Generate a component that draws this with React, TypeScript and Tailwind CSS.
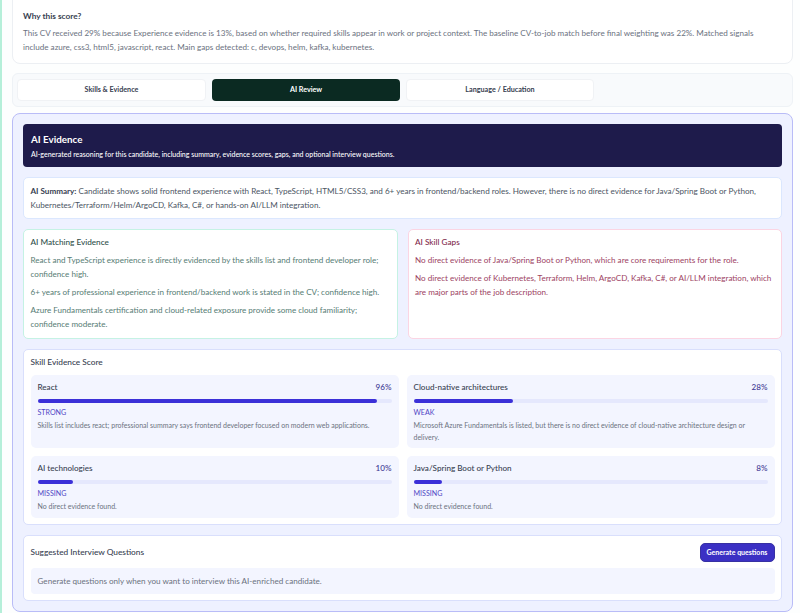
const font = { fontFamily: 'Lato, "Noto Sans", sans-serif' };

const skills = [
  {
    name: "React",
    score: 96,
    level: "STRONG",
    note: "Skills list includes react; professional summary says frontend developer focused on modern web applications.",
  },
  {
    name: "Cloud-native architectures",
    score: 28,
    level: "WEAK",
    note: "Microsoft Azure Fundamentals is listed, but there is no direct evidence of cloud-native architecture design or delivery.",
  },
  { name: "AI technologies", score: 10, level: "MISSING", note: "No direct evidence found." },
  { name: "Java/Spring Boot or Python", score: 8, level: "MISSING", note: "No direct evidence found." },
];

function SkillCard({ name, score, level, note }: { name: string; score: number; level: string; note: string }) {
  return (
    <div className="rounded-[5px] bg-[#f3f5ff] px-[7px] pt-[6px] pb-[7px]">
      <div className="flex justify-between text-[8.1px] leading-[13px]">
        <span className="font-medium text-[#374151]">{name}</span>
        <span className="font-medium text-[#3f3a94]">{score}%</span>
      </div>
      <div className="mt-[5px] h-[4px] rounded-full bg-[#e5e8fd]">
        <div className="h-full rounded-full bg-[#3b30d8]" style={{ width: `${score}%` }} />
      </div>
      <div className="mt-[3px] text-[7.1px] leading-[13px] text-[#4f46c5]">{level}</div>
      <p className="pr-[6px] text-[7px] leading-[12px] text-[#6b7280]">{note}</p>
    </div>
  );
}

export default function App() {
  return (
    <div style={font} className="h-[613px] overflow-hidden border-l-2 border-[#b5efd9] bg-[#fdfefe] pr-[7px] pl-[10px]">
      <section className="-mt-px h-[65px] rounded-b-[8px] border border-[#eceff3] bg-white pt-[10px] pr-[14px] pl-[10px]">
        <h3 className="text-[8.3px] leading-[13px] font-bold text-[#374151]">Why this score?</h3>
        <p className="mt-[4px] text-[8.1px] leading-[13.6px] text-[#6b7280]">
          This CV received 29% because Experience evidence is 13%, based on whether required skills appear in work or
          project context. The baseline CV-to-job match before final weighting was 22%. Matched signals include azure,
          css3, html5, javascript, react. Main gaps detected: c, devops, helm, kafka, kubernetes.
        </p>
      </section>

      <nav className="mt-[9px] flex h-[34px] gap-[6px] rounded-[6px] border border-[#eef2f6] bg-[#f8fafc] px-[4px] py-[5px]">
        <button className="w-[189px] rounded-[4px] border border-[#f0f2f5] bg-white pt-px text-[7.2px] font-bold text-[#374151]">
          Skills &amp; Evidence
        </button>
        <button className="w-[188px] rounded-[4px] bg-[#0b2a22] pt-px text-[7.2px] font-bold text-white">AI Review</button>
        <button className="w-[188px] rounded-[4px] border border-[#f0f2f5] bg-white pt-px text-[7.2px] font-bold text-[#374151]">
          Language / Education
        </button>
      </nav>

      <main className="mt-[6px] flex h-[499px] flex-col gap-[10px] rounded-[8px] border border-[#b9bcf7] bg-[#eef1ff] p-[10px]">
        <header className="h-[43px] shrink-0 rounded-[4px] bg-[#1e1b4b] px-[8px] pt-[8px] text-white">
          <h2 className="text-[9.8px] leading-[14px] font-bold">AI Evidence</h2>
          <p className="mt-[2px] text-[7px] leading-[12px] font-medium">
            AI-generated reasoning for this candidate, including summary, evidence scores, gaps, and optional interview
            questions.
          </p>
        </header>

        <section className="h-[42px] shrink-0 rounded-[5px] border border-[#dbe7fe] bg-white px-[6.5px] pt-[7px] text-[8.1px] leading-[13.6px] text-[#4b5563]">
          <strong className="font-bold text-[#374151]">AI Summary:</strong> Candidate shows solid frontend experience
          with React, TypeScript, HTML5/CSS3, and 6+ years in frontend/backend roles. However, there is no direct evidence
          for Java/Spring Boot or Python, Kubernetes/Terraform/Helm/ArgoCD, Kafka, C#, or hands-on AI/LLM integration.
        </section>

        <div className="grid h-[110px] shrink-0 grid-cols-2 gap-[10px]">
          <section className="rounded-[5px] border border-[#c5f2e4] bg-white px-[6.5px] pt-[5px] text-[8.1px] leading-[14px] text-[#567c74]">
            <h3 className="text-[8.2px] font-medium text-[#2f4f4a]">AI Matching Evidence</h3>
            <p className="mt-[4px]">
              React and TypeScript experience is directly evidenced by the skills list and frontend developer role;
              confidence high.
            </p>
            <p className="mt-[4px]">6+ years of professional experience in frontend/backend work is stated in the CV; confidence high.</p>
            <p className="mt-[4px]">
              Azure Fundamentals certification and cloud-related exposure provide some cloud familiarity; confidence
              moderate.
            </p>
          </section>
          <section className="rounded-[5px] border border-[#fbd5e3] bg-white px-[6.5px] pt-[5px] text-[8.1px] leading-[14px] text-[#9d3f63]">
            <h3 className="text-[8.2px] font-medium text-[#7f2a4c]">AI Skill Gaps</h3>
            <p className="mt-[4px]">No direct evidence of Java/Spring Boot or Python, which are core requirements for the role.</p>
            <p className="mt-[4px]">
              No direct evidence of Kubernetes, Terraform, Helm, ArgoCD, Kafka, C#, or AI/LLM integration, which are major
              parts of the job description.
            </p>
          </section>
        </div>

        <section className="h-[176px] shrink-0 rounded-[5px] border border-[#d9dffc] bg-white px-[6.5px] pt-[5px]">
          <h3 className="text-[8.3px] leading-[14px] font-medium text-[#374151]">Skill Evidence Score</h3>
          <div className="mt-[6px] grid grid-cols-2 grid-rows-[73px_62px] gap-[8px]">
            {skills.map((s) => (
              <SkillCard key={s.name} {...s} />
            ))}
          </div>
        </section>

        <section className="h-[66px] shrink-0 rounded-[5px] border border-[#d9dffc] bg-white px-[6.5px] pt-[7px]">
          <div className="flex items-center justify-between">
            <h3 className="text-[8.3px] font-medium text-[#374151]">Suggested Interview Questions</h3>
            <button className="h-[19px] w-[75px] rounded-[5px] border border-[#3730a3] bg-[#3b30c4] text-[7px] font-bold text-white">
              Generate questions
            </button>
          </div>
          <div className="mt-[6px] h-[26px] rounded-[4px] bg-[#f3f5ff] px-[7px] text-[8.1px] leading-[26px] text-[#6b7280]">
            Generate questions only when you want to interview this AI-enriched candidate.
          </div>
        </section>
      </main>
    </div>
  );
}
